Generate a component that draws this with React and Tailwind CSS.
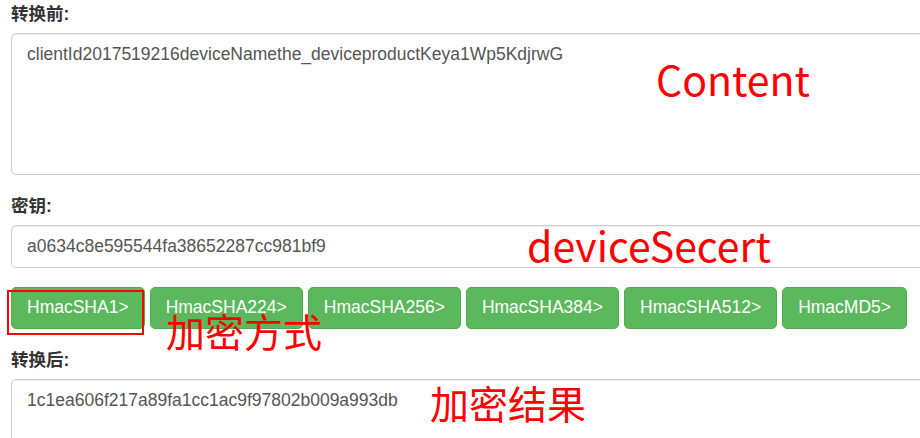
import React from "react";

const fieldFont = { fontFamily: '"Liberation Sans", Arial, "Noto Sans CJK SC", sans-serif' };
const noteFont = { fontFamily: '"Noto Sans CJK SC", "Noto Sans", sans-serif' };

const algorithms = ["HmacSHA1", "HmacSHA224", "HmacSHA256", "HmacSHA384", "HmacSHA512", "HmacMD5"];

// bootstrap-like form label, scaled 1.25x
const Label = ({ children }) => (
  <label className="block mb-[6px] text-[17.5px] leading-[25px] font-bold text-[#333]">{children}</label>
);

const App = () => {
  return (
    <div className="relative w-[920px] h-[438px] overflow-hidden bg-white" style={fieldFont}>
      <div className="w-[1000px] pl-[11px] pt-[2px]">
        {/* source content */}
        <div className="mb-[19px]">
          <Label>转换前:</Label>
          <div className="h-[142px] border border-[#ccc] rounded-[5px] px-[15px] py-[7.5px] text-[17.5px] leading-[25px] text-[#555] shadow-[inset_0_1px_1px_rgba(0,0,0,0.075)]">
            clientId2017519216deviceNamethe_deviceproductKeya1Wp5KdjrwG
          </div>
        </div>

        {/* secret */}
        <div className="mb-[19px]">
          <Label>密钥:</Label>
          <div className="h-[42.5px] border border-[#ccc] rounded-[5px] px-[15px] py-[7.5px] text-[17.5px] leading-[25px] text-[#555] shadow-[inset_0_1px_1px_rgba(0,0,0,0.075)]">
            a0634c8e595544fa38652287cc981bf9
          </div>
        </div>

        {/* algorithm buttons */}
        <div className="flex gap-[5px] mb-[19px]">
          {algorithms.map((name) => (
            <button
              key={name}
              className="h-[42.5px] px-[15px] border border-[#4cae4c] bg-[#5cb85c] rounded-[5px] text-white text-[17.5px] leading-[25px]"
            >
              {name}&gt;
            </button>
          ))}
        </div>

        {/* result */}
        <div>
          <Label>转换后:</Label>
          <div className="h-[142px] border border-[#ccc] rounded-[5px] px-[15px] py-[7.5px] text-[17.5px] leading-[25px] text-[#555] shadow-[inset_0_1px_1px_rgba(0,0,0,0.075)]">
            1c1ea606f217a89fa1cc1ac9f97802b009a993db
          </div>
        </div>
      </div>

      {/* red annotations */}
      <div className="absolute left-[7px] top-[290px] w-[137px] h-[45px] border-2 border-[#f00]"></div>
      <div className="absolute left-[656px] top-[58px] text-[41px] leading-none text-[#f00]" style={noteFont}>Content</div>
      <div className="absolute left-[527px] top-[224px] text-[41px] leading-none text-[#f00]" style={noteFont}>deviceSecert</div>
      <div className="absolute left-[166px] top-[311px] text-[39px] leading-none text-[#f00]" style={noteFont}>加密方式</div>
      <div className="absolute left-[430px] top-[383px] text-[39px] leading-none text-[#f00]" style={noteFont}>加密结果</div>
    </div>
  );
};

export default App;
